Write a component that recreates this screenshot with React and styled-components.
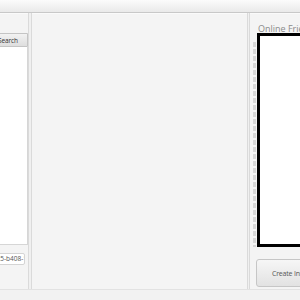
import React from 'react'
import styled, { createGlobalStyle } from 'styled-components'

const Global = createGlobalStyle`
  html, body { margin: 0; padding: 0; }
  body {
    width: 300px;
    height: 300px;
    overflow: hidden;
    font-family: "Open Sans", "Noto Sans", sans-serif;
  }
`

const Window = styled.div`
  display: flex;
  flex-direction: column;
  width: 300px;
  height: 300px;
  background: #f4f4f4;
  overflow: hidden;
`

const TopBar = styled.div`
  height: 12px;
  flex-shrink: 0;
  background: linear-gradient(#fbfbfb, #e9e9e9);
  border-bottom: 1px solid #c8c8c8;
  box-shadow: 0 1px 0 #fafafa;
`

const Main = styled.div`
  flex: 1;
  display: flex;
  min-height: 0;
`

const Pane = styled.div`
  width: ${p => p.w ? p.w + 'px' : 'auto'};
  flex: ${p => p.w ? '0 0 auto' : '1'};
  display: flex;
  justify-content: ${p => p.align || 'flex-start'};
  overflow: hidden;
`

const Divider = styled.div`
  flex: 0 0 auto;
  width: ${p => p.w || 4}px;
  box-sizing: border-box;
  border-left: 1px solid #dadada;
  border-right: 1px solid #dadada;
  background: #f0f0f0;
`

const LeftColumn = styled.div`
  flex: 0 0 160px;
  display: flex;
  flex-direction: column;
  padding: 20px 0 24px;
`

const SearchButton = styled.button`
  height: 14px;
  box-sizing: border-box;
  padding: 0 9px 0 0;
  border: 1px solid #c4c4c4;
  border-radius: 2px 0 0 2px;
  background: linear-gradient(#f2f2f2, #dedede);
  font: 6.5px "Open Sans", sans-serif;
  letter-spacing: -0.1px;
  color: #333;
  text-align: right;
`

const List = styled.div`
  flex: 1;
  background: #fff;
  border: 1px solid #d6d6d6;
  border-top: none;
`

const Field = styled.div`
  height: 12px;
  margin: 8px 3px 0 0;
  box-sizing: border-box;
  background: #fff;
  border: 1px solid #d4d4d4;
  border-radius: 2px;
  font: 6.5px/10px "Open Sans", sans-serif;
  color: #555;
  text-align: right;
  white-space: nowrap;
  overflow: hidden;
`

const FieldText = styled.span`
  margin-right: -3px;
`

const RightColumn = styled.div`
  flex: 0 0 200px;
  display: flex;
  flex-direction: column;
  padding: 10px 0 2px 3px;
`

const Label = styled.div`
  font: 9px/11px "Open Sans", sans-serif;
  color: #8a8a8a;
  padding-left: 5px;
  height: 10px;
`

const FriendsArea = styled.div`
  display: flex;
  gap: 1px;
  height: 214px;
  flex: 0 0 auto;
`

const DashStrip = styled.div`
  width: 3px;
  margin-top: 9px;
  background: repeating-linear-gradient(#d6d6d6 0 5px, transparent 5px 7px);
`

const FriendsBox = styled.div`
  flex: 1;
  background: #fff;
  border: 3px solid #000;
`

const CreateButton = styled.button`
  margin: 12px 0 0 3px;
  height: 29px;
  box-sizing: border-box;
  border: 1px solid #c6c6c6;
  border-radius: 3px;
  background: linear-gradient(#f6f6f6, #e2e2e2);
  font: 7px "Open Sans", sans-serif;
  letter-spacing: -0.2px;
  color: #555;
  text-align: left;
  padding-left: 15px;
  white-space: nowrap;
`

const StatusBar = styled.div`
  height: 10px;
  flex-shrink: 0;
  border-top: 1px solid #e2e2e2;
  background: #f2f2f2;
`

export default function App() {
  return (
    <>
      <Global />
      <Window>
        <TopBar />
        <Main>
          <Pane w={28} align="flex-end">
            <LeftColumn>
              <SearchButton>Search</SearchButton>
              <List />
              <Field><FieldText>a91c7e25-b408-1</FieldText></Field>
            </LeftColumn>
          </Pane>
          <Divider />
          <Pane />
          <Divider w={3} />
          <Pane w={50}>
            <RightColumn>
              <Label>Online Friends</Label>
              <FriendsArea>
                <DashStrip />
                <FriendsBox />
              </FriendsArea>
              <CreateButton>Create Instance</CreateButton>
            </RightColumn>
          </Pane>
        </Main>
        <StatusBar />
      </Window>
    </>
  )
}
